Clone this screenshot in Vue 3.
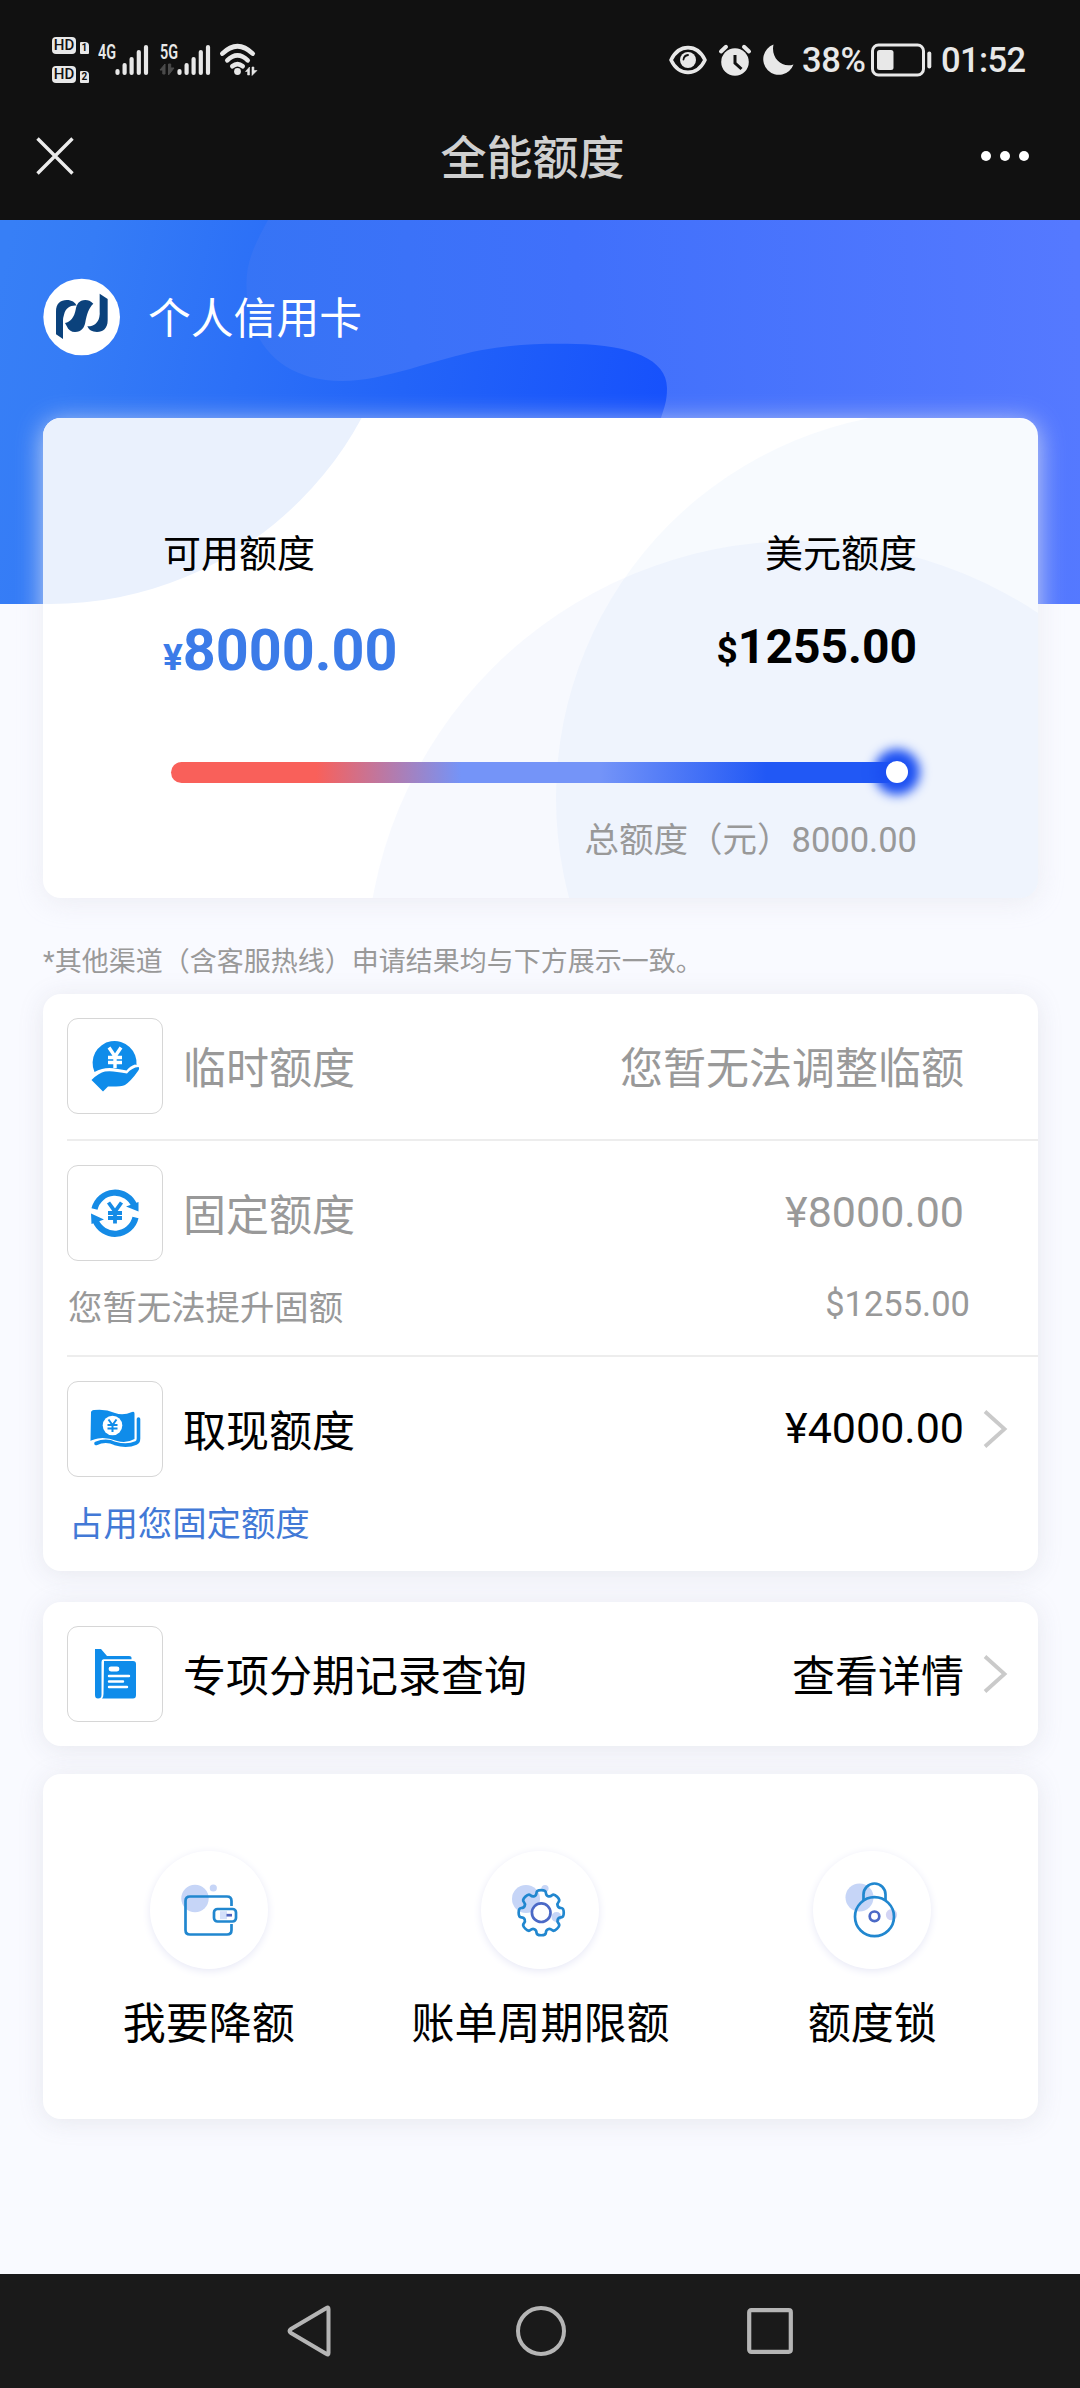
<script setup>
const signals = [
  { label: '4G', muted: false },
  { label: '5G', muted: true },
]
const bars = [
  { x: 19.5, y: 22 },
  { x: 26.6, y: 16 },
  { x: 33.6, y: 10 },
  { x: 40.8, y: 3 },
  { x: 48, y: -2 },
]
const rows = [
  { icon: 'hand', title: '临时额度', value: '您暂无法调整临额', muted: true },
  { icon: 'cycle', title: '固定额度', value: '¥8000.00', numeric: true, muted: true, note: '您暂无法提升固额', extra: '$1255.00' },
  { icon: 'cash', title: '取现额度', value: '¥4000.00', numeric: true, arrow: true, note: '占用您固定额度', link: true },
]
const record = [{ icon: 'folder', title: '专项分期记录查询', value: '查看详情', arrow: true }]
const groups = [rows, record]
const actions = [
  { icon: 'wallet', label: '我要降额' },
  { icon: 'gear', label: '账单周期限额' },
  { icon: 'lock', label: '额度锁' },
]

// Eight-tooth cog outline with rounded corners
const gearPath = (() => {
  const pts = []
  for (let i = 0; i < 8; i++) {
    const a = (i * Math.PI) / 4 - Math.PI / 2
    for (const [d, r] of [[-0.27, 18], [-0.2, 23], [0.2, 23], [0.27, 18]]) {
      pts.push([Math.cos(a + d) * r, Math.sin(a + d) * r])
    }
  }
  const mid = (p, q) => [(p[0] + q[0]) / 2, (p[1] + q[1]) / 2]
  const start = mid(pts[pts.length - 1], pts[0])
  let d = `M${start[0].toFixed(2)} ${start[1].toFixed(2)}`
  pts.forEach((p, i) => {
    const n = pts[(i + 1) % pts.length]
    const m = mid(p, n)
    d += `Q${p[0].toFixed(2)} ${p[1].toFixed(2)} ${m[0].toFixed(2)} ${m[1].toFixed(2)}`
  })
  return d + 'Z'
})()
</script>

<template>
  <div class="screen">
    <header class="top">
      <div class="status">
        <div class="hds">
          <div v-for="n in 2" :key="n" class="hd-row">
            <span class="hd">HD</span><span class="sim">{{ n }}</span>
          </div>
        </div>
        <div v-for="s in signals" :key="s.label" class="signal">
          <span class="net">{{ s.label }}</span>
          <svg width="54" height="40" viewBox="0 -10 54 40">
            <line v-for="b in bars" :key="b.x" :x1="b.x" :x2="b.x" :y1="b.y" y2="24" stroke="#e8e8e8" stroke-width="4.2" stroke-linecap="round" />
            <path v-if="s.muted" d="M0 21L5 15V25H2.800V21ZM8.500 15H10.700V19H14L8.500 26Z" fill="#4a4a4a" stroke="#4a4a4a" stroke-width="1" />
          </svg>
        </div>
        <svg class="wifi" width="40" height="34" viewBox="0 0 40 34">
          <g fill="none" stroke="#e8e8e8" stroke-width="4.600" stroke-linecap="round">
            <path d="M3.300 10.600Q18.500-4.200 33.700 10.600" />
            <path d="M8.300 17.300Q18.500 7.500 28.700 17.300" />
            <path d="M13.300 23.300Q18.500 18.800 23.700 23.300" />
          </g>
          <circle cx="18.500" cy="28.500" r="3.400" fill="#e8e8e8" />
          <path d="M26.500 28.500L30.500 24V32H28.600V28.500ZM33 24H34.900V27.500H38L33 32.500Z" fill="#e8e8e8" stroke="#e8e8e8" stroke-width=".6" />
        </svg>
        <div class="status-right">
          <svg width="38" height="32" viewBox="0 0 38 32">
            <path d="M2 16C10-.5 28-.5 36 16C28 32.500 10 32.500 2 16Z" fill="none" stroke="#e8e8e8" stroke-width="3.600" stroke-linejoin="round" />
            <circle cx="19" cy="16" r="8" fill="#e8e8e8" />
            <path d="M14.500 15.500q.5-4 4.500-4.500" fill="none" stroke="#111" stroke-width="1.800" stroke-linecap="round" />
          </svg>
          <svg class="alarm" width="32" height="32" viewBox="0 0 32 32">
            <circle cx="16" cy="18" r="13.800" fill="#e8e8e8" />
            <path d="M2 7.500L7 2.800M30 7.500L25 2.800" stroke="#e8e8e8" stroke-width="4" stroke-linecap="round" />
            <path d="M16 11v8l6.500 6" fill="none" stroke="#111" stroke-width="3" />
          </svg>
          <svg class="moon" width="32" height="32" viewBox="0 0 32 32">
            <path d="M11.500.5A15.600 15.600 0 1 0 31.500 20.500C20 24.500 8.500 14 11.500.5Z" fill="#e8e8e8" />
          </svg>
          <span class="pct">38%</span>
          <svg class="battery" width="61" height="34" viewBox="0 0 61 34">
            <rect x="1.500" y="2" width="51" height="30" rx="6" fill="none" stroke="#e8e8e8" stroke-width="3" />
            <rect x="6" y="7" width="16.500" height="20" rx="2.500" fill="#e8e8e8" />
            <rect x="56.300" y="8.500" width="4" height="17" rx="2" fill="#e8e8e8" />
          </svg>
          <span class="clock">01:52</span>
        </div>
      </div>
      <div class="titlebar">
        <svg width="38" height="38" viewBox="0 0 38 38">
          <path d="M1.500 1.500L36.500 36.500M36.500 1.500L1.500 36.500" stroke="#ececec" stroke-width="3.400" />
        </svg>
        <h1>全能额度</h1>
        <div class="more"><i v-for="n in 3" :key="n"></i></div>
      </div>
    </header>

    <main>
      <section class="hero">
        <svg class="hero-bg" width="1080" height="384" viewBox="0 0 1080 384">
          <defs>
            <linearGradient id="base" gradientUnits="userSpaceOnUse" x1="0" y1="60" x2="680" y2="200">
              <stop offset="0" stop-color="#377ff6" />
              <stop offset=".12" stop-color="#357cf6" />
              <stop offset=".6" stop-color="#2364f8" />
              <stop offset="1" stop-color="#1650fc" />
            </linearGradient>
            <linearGradient id="blob" gradientUnits="userSpaceOnUse" x1="246" y1="140" x2="1080" y2="100">
              <stop offset="0" stop-color="#3674f5" />
              <stop offset=".4" stop-color="#4070fb" />
              <stop offset="1" stop-color="#5579ff" />
            </linearGradient>
          </defs>
          <rect width="1080" height="384" fill="url(#base)" />
          <path d="M268 0C254 26 246 42 246.500 66C247 122 280 161 342 161C385 161 434 139 482 130C514 124 545 123.500 576 124C630 125 667 139 667 168C667 182 664 188 661 198V384H1080V0Z" fill="url(#blob)" />
        </svg>
        <div class="owner">
          <span class="logo">
            <svg width="78" height="78" viewBox="9 9 234 234">
              <circle cx="125" cy="126" r="115" fill="#fff" />
              <g fill="#0b427c">
                <path d="M69 192L48 178V110C48 85 62 75 80 75C96 75 105 82 110 92C92 90 77 99 72 119Q69 128 69 136Z" />
                <path d="M160 86C152 78 145 75 136 75C117 75 110 88 107 104C103 126 92 140 75 144L80 153C85 165 94 171 105 171C125 171 133 158 136 142C140 118 147 98 160 86Z" />
                <path d="M179 56L203 72V136C203 161 189 171 171 171C156 171 147 165 142 154C160 155 174 145 178 126Q180 118 179 110Z" />
              </g>
            </svg>
          </span>
          <span>个人信用卡</span>
        </div>
      </section>

      <section class="quota">
        <svg class="quota-bg" width="995" height="480" viewBox="0 0 995 480">
          <circle cx="7" cy="-168" r="354" fill="#eaf1fd" />
          <circle cx="900" cy="380" r="387" fill="#3c76f0" fill-opacity=".04" />
          <circle cx="756" cy="556" r="433" fill="#3c66f0" fill-opacity=".038" />
        </svg>
        <div class="pair labels"><span>可用额度</span><span>美元额度</span></div>
        <div class="pair amounts">
          <b class="cny"><small>¥</small>8000.00</b>
          <b class="usd"><small>$</small>1255.00</b>
        </div>
        <div class="track"><i class="knob"></i></div>
        <div class="total">总额度（元）8000.00</div>
      </section>

      <p class="tip">*其他渠道（含客服热线）申请结果均与下方展示一致。</p>

      <section v-for="(g, gi) in groups" :key="gi" class="card">
        <div v-for="r in g" :key="r.title" class="row" :class="{ muted: r.muted }">
          <div class="line">
            <span class="tile">
              <svg v-if="r.icon === 'hand'" width="96" height="96" viewBox="0 0 96 96" fill="#0f8cea">
                <path d="M27.500 54A22 22 0 1 1 69.500 47L68 46.500Q63 48 59.500 52.500Q56 51.500 51 51Q42 49 35 51Q31 52 27.500 54Z" />
                <path d="M24.500 62Q32 54.500 38 53.500Q44 52.800 50 54Q56 54.500 60 55.500Q65 49.500 71.500 49Q73 50 71 53Q64 63 58 67Q54 68.800 41 68.500L36 73.500Z" />
                <path d="M42 29.500L48 38.500L54 29.500M48 38.500V50M41 39.500H55M41 44.500H55" fill="none" stroke="#fff" stroke-width="3.400" />
              </svg>
              <svg v-else-if="r.icon === 'cycle'" width="96" height="96" viewBox="0 0 96 96" fill="none" stroke="#158be6">
                <path d="M27.500 44A21 21 0 0 1 67.500 41" stroke-width="6.200" />
                <path d="M68.500 52.500A21 21 0 0 1 28.500 55.500" stroke-width="6.200" />
                <path d="M59 41.500L71.500 46.500V37ZM37 54.500L24 48.500L24.500 59Z" fill="#158be6" stroke="none" />
                <path d="M41.500 37.500L48 46.500L54.500 37.500M48 46.500V58.500M41 48H55M41 53H55" stroke-width="3.800" />
              </svg>
              <svg v-else-if="r.icon === 'cash'" width="96" height="96" viewBox="0 0 96 96">
                <path d="M24 31.500Q24 29.500 27 29Q38 27.500 48 32Q56 35 65 31Q67.500 30 67.500 32.500V58Q60 62.500 50 60Q39 56 31 57.500Q24 59 23.500 60Z" fill="#0f8cea" />
                <path d="M29 62.500Q39 58 48 62.500Q60 66 69 62Q71.500 61 71.500 57.500V38" fill="none" stroke="#0f8cea" stroke-width="3.600" stroke-linecap="round" />
                <circle cx="45.500" cy="44.500" r="9.800" fill="#fff" />
                <path d="M41.500 38.500L45.500 44L49.500 38.500M45.500 44V51M40.500 44H50.500M40.500 47.500H50.500" fill="none" stroke="#0f8cea" stroke-width="2" />
              </svg>
              <svg v-else width="96" height="96" viewBox="0 0 96 96" fill="#0f8cea">
                <path d="M28 23H34L40 30H62Q65 30 64.500 33.200H36.500Q34.500 33.500 34.500 36V69Q34.500 72.500 31 72.500Q28 72.500 28 69Z" />
                <path d="M37 35H66Q69 35 69 38V69Q69 72.500 66 72.500H35Q36.500 71 36.500 68Z" />
                <path d="M44 43H50" stroke="#fff" stroke-width="4.800" stroke-linecap="round" />
                <path d="M42 50H62M42 55.500H56M42 61H60" stroke="#fff" stroke-width="2.400" stroke-linecap="round" />
              </svg>
            </span>
            <span class="name">{{ r.title }}</span>
            <span class="value" :class="{ numeric: r.numeric }">{{ r.value }}</span>
            <svg class="chev" width="24" height="38" viewBox="0 0 24 38">
              <path v-if="r.arrow" d="M2 1.500L21.500 19L2 36.500" fill="none" stroke="#cacaca" stroke-width="3.800" />
            </svg>
          </div>
          <div v-if="r.note" class="sub" :class="{ link: r.link }">
            <span>{{ r.note }}</span><span class="extra">{{ r.extra }}</span>
          </div>
        </div>
      </section>

      <section class="card actions">
        <div v-for="a in actions" :key="a.label" class="action">
          <span class="disc">
            <svg width="118" height="118" viewBox="-59 -59 118 118" fill="none" stroke="#2187cf" stroke-width="2.700">
              <template v-if="a.icon === 'wallet'">
                <g fill="#c6d5f7" stroke="none"><circle cx="-14" cy="-11.500" r="13.700" /><circle cx="4.300" cy="-22" r="3.600" /></g>
                <path d="M22.500-4V-9Q22.500-13.500 18-13.500H-19Q-23.500-13.500-23.500-9V20Q-23.500 24.500-19 24.500H18Q22.500 24.500 22.500 20V14" />
                <rect x="5" y="-1" width="22" height="12.500" rx="3.500" />
                <rect x="11" y="1.200" width="7" height="8" fill="#d3dffa" stroke="none" />
                <path d="M17.500 5.200H23" stroke="#5063bd" />
              </template>
              <template v-else-if="a.icon === 'gear'">
                <g fill="#c6d5f7" stroke="none"><circle cx="-14" cy="-11" r="14" /><circle cx="5" cy="-21.500" r="3.600" /><circle cx="16.500" cy="7" r="5" /></g>
                <g transform="translate(1.200 2.700)">
                  <path :d="gearPath" />
                  <circle r="9.300" stroke="#4b69c6" fill="#fff" />
                </g>
              </template>
              <template v-else>
                <g fill="#c6d5f7" stroke="none"><circle cx="-12.500" cy="-12.500" r="14" /><circle cx="19.500" cy="4.700" r="5.600" fill="#d3d4f4" /></g>
                <path d="M-8.500-9V-15.500A11 11 0 0 1 13.500-15.500V-9" />
                <circle cx="2.500" cy="6.700" r="19.500" />
                <circle cx="2.500" cy="6.300" r="4.800" stroke="#4b69c6" />
              </template>
            </svg>
          </span>
          <span>{{ a.label }}</span>
        </div>
      </section>
    </main>

    <nav class="navbar">
      <svg width="48" height="56" viewBox="0 0 48 56"><path d="M41.500 6V50Q41.500 52.500 39.500 51L4 30Q1 28 4 26L39.500 5Q41.500 3.500 41.500 6Z" fill="none" stroke="#b5b5b5" stroke-width="4" /></svg>
      <svg width="52" height="52" viewBox="0 0 52 52"><circle cx="26" cy="26" r="23" fill="none" stroke="#b5b5b5" stroke-width="4" /></svg>
      <svg width="46" height="46" viewBox="0 0 46 46"><rect x="2.200" y="2.200" width="41.600" height="41.600" rx="2" fill="none" stroke="#b5b5b5" stroke-width="4.200" /></svg>
    </nav>
  </div>
</template>

<style>
body { margin: 0; background: #f9faff; }
</style>

<style scoped>
.screen {
  width: 1080px;
  height: 2388px;
  display: flex;
  flex-direction: column;
  overflow: hidden;
  background: #f9faff;
  color: #000;
  font-family: Roboto, "Noto Sans CJK SC", sans-serif;
}
svg { display: block; flex: none; overflow: visible; }
.top { height: 220px; background: #111; flex: none; }
.status { display: flex; align-items: center; height: 119px; padding: 0 54px 0 52px; color: #e8e8e8; box-sizing: border-box; }
.hds { display: flex; flex-direction: column; gap: 12px; width: 46px; }
.hd-row { display: flex; align-items: flex-end; gap: 4px; height: 17px; }
.hd { width: 24px; height: 17px; border-radius: 4px; background: #e8e8e8; color: #111; font: 500 15px/17px Roboto, sans-serif; text-align: center; }
.sim { width: 8.500px; height: 12px; border-radius: 1px 4px 1px 1px; background: #e8e8e8; color: #111; font: 700 10px/12px Roboto, sans-serif; text-align: center; }
.signal { width: 61.500px; position: relative; top: -2px; }
.signal svg { margin-top: 2px; }
.net { position: absolute; left: 0; top: 5px; font: 600 20px/20px Roboto, sans-serif; transform: scaleX(.72); transform-origin: left; }
.wifi { margin-left: -2px; }
.status-right { display: flex; align-items: center; margin-left: auto; }
.alarm { margin-left: 11.500px; }
.moon { margin-left: 11.500px; }
.pct, .clock { font-weight: 500; font-size: 34.500px; line-height: 40px; }
.pct { margin-left: 8px; width: 61px; letter-spacing: -.3px; margin-right: 8px; }
.clock { margin-left: 9px; letter-spacing: -.6px; width: 85px; }
.titlebar { display: flex; align-items: center; justify-content: space-between; height: 76px; padding: 0 51px 0 36px; margin-top: -1px; }
h1 { margin: 0; font-size: 46px; line-height: 60px; font-weight: 500; color: #d0d0d0; padding-top: 4px; padding-left: 10px; }
.more { display: flex; gap: 9px; }
.more i { width: 10px; height: 10px; border-radius: 50%; background: #fff; }

main { flex: 1; }
.hero { height: 384px; position: relative; }
.hero-bg { position: absolute; left: 0; top: 0; }
.owner { position: relative; display: flex; align-items: center; gap: 27px; padding: 57px 0 0 43px; color: #fff; font-size: 42.800px; line-height: 78px; }
.logo { height: 80px; }
.owner span:last-child { padding-top: 3px; }

.quota {
  position: relative;
  width: 995px;
  height: 480px;
  margin: -186px 0 0 43px;
  border-radius: 18px;
  background: #fff;
  box-shadow: 0 4px 26px rgba(232, 234, 240, .8);
}
.quota-bg { position: absolute; inset: 0; overflow: hidden; border-radius: 18px; }
.pair, .total, .track { position: relative; }
.pair { display: flex; justify-content: space-between; padding: 0 121px 0 120px; }
.labels { padding-top: 111px; font-size: 38px; line-height: 50px; }
.amounts { height: 86px; margin-top: 26px; align-items: flex-start; }
.amounts small { font-weight: 700; }
.cny { font-size: 57.500px; line-height: 91px; color: #3b7be8; }
.cny small { font-size: 37px; }
.usd { font-size: 48px; line-height: 83px; }
.usd small { font-size: 37px; }
.track {
  width: 726px;
  height: 21px;
  margin: 71px 0 0 128px;
  border-radius: 11px;
  background: linear-gradient(90deg, #f9605a 0, #f9605a 20%, #7494f8 40%, #7494f8 59%, #2158f5 82%, #2158f5);
}
.knob { position: absolute; right: -11px; top: -1px; width: 22px; height: 22px; border-radius: 50%; background: #fff; box-shadow: 0 0 11px 12px #1c50f2; }
.total { margin-top: 32px; padding-right: 121px; text-align: right; font-size: 34.500px; line-height: 50px; color: #999; }

.tip { margin: 44px 0 16px 43px; height: 36px; font-size: 27px; line-height: 40px; color: #999; }
.card {
  width: 995px;
  margin: 0 0 31px 43px;
  border-radius: 18px;
  background: #fff;
  box-shadow: 0 3px 24px rgba(228, 230, 236, .9);
}
.row { margin-left: 24px; padding: 24px 0; }
.row + .row { border-top: 2px solid #ededed; }
.row:first-child:not(:last-child) { padding-bottom: 25px; }
.line { display: flex; align-items: center; height: 96px; font-size: 43px; line-height: 60px; }
.tile { width: 96px; height: 96px; box-sizing: border-box; border: 1px solid #d6d6d6; border-radius: 11px; }
.tile svg { margin: -1px; }
.name { margin-left: 20px; padding-top: 5px; }
.value { margin-left: auto; padding-top: 5px; }
.value.numeric { padding-top: 0; position: relative; top: -1px; }
.chev { margin: 0 31px 0 19px; }
.muted { color: #999; }
.sub { display: flex; justify-content: space-between; padding: 22px 68px 0 1px; font-size: 34.400px; line-height: 50px; height: 49px; }
.sub { margin-bottom: -1px; }
.extra { font-size: 34.500px; position: relative; top: -4px; }
.link { color: #4279d6; padding-left: 2px; }

.actions { display: grid; grid-template-columns: repeat(3, 1fr); height: 345px; margin-top: -3px; margin-bottom: 0; }
.action { display: flex; flex-direction: column; align-items: center; padding-top: 77px; font-size: 43px; line-height: 60px; }
.disc { width: 118px; height: 118px; border-radius: 50%; background: #fff; box-shadow: 0 2px 9px #e7e8f6; margin-bottom: 25px; }

.navbar { height: 114px; flex: none; display: flex; align-items: center; justify-content: center; gap: 180px; background: #1a1a1a; }
</style>
